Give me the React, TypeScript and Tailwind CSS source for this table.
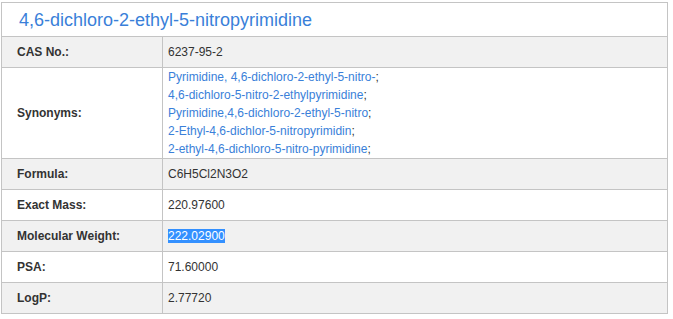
import React from 'react';

type Row = { label: string; value: React.ReactNode; shaded: boolean };

const synonyms = [
  'Pyrimidine, 4,6-dichloro-2-ethyl-5-nitro-',
  '4,6-dichloro-5-nitro-2-ethylpyrimidine',
  'Pyrimidine,4,6-dichloro-2-ethyl-5-nitro',
  '2-Ethyl-4,6-dichlor-5-nitropyrimidin',
  '2-ethyl-4,6-dichloro-5-nitro-pyrimidine',
];

const rows: Row[] = [
  { label: 'CAS No.:', value: '6237-95-2', shaded: true },
  {
    label: 'Synonyms:',
    shaded: false,
    value: (
      <div className="leading-[18px]">
        {synonyms.map(s => (
          <div key={s}>
            <a href="#" className="text-[#3a7fd9]">{s}</a>;
          </div>
        ))}
      </div>
    ),
  },
  { label: 'Formula:', value: 'C6H5Cl2N3O2', shaded: true },
  { label: 'Exact Mass:', value: '220.97600', shaded: false },
  {
    label: 'Molecular Weight:',
    value: <span className="bg-[#3390ff] text-white">222.02900</span>,
    shaded: true,
  },
  { label: 'PSA:', value: '71.60000', shaded: false },
  { label: 'LogP:', value: '2.77720', shaded: true },
];

export default function App() {
  return (
    <div className="w-[673px] h-[319px] bg-white pt-[2px] pl-[1px] font-['Liberation_Sans',Arial,sans-serif]">
      <table className="w-[667px] border-collapse text-[12px] text-[#333]">
        <tbody>
          <tr>
            <td colSpan={2} className="h-[34px] border border-[#c4c4c4] pl-[17px] pt-[1px] text-[18px] text-[#3a7fd9] align-middle">
              4,6-dichloro-2-ethyl-5-nitropyrimidine
            </td>
          </tr>
          {rows.map(r => (
            <tr key={r.label} className={r.shaded ? 'bg-[#f1f1f1]' : 'bg-white'}>
              <td className={`w-[161px] border border-[#c4c4c4] pl-[15px] font-bold align-middle ${r.label === 'Synonyms:' ? 'h-[91px]' : 'h-[31px]'}`}>
                {r.label}
              </td>
              <td className="border border-[#c4c4c4] pl-[5px] align-middle">{r.value}</td>
            </tr>
          ))}
        </tbody>
      </table>
    </div>
  );
}
